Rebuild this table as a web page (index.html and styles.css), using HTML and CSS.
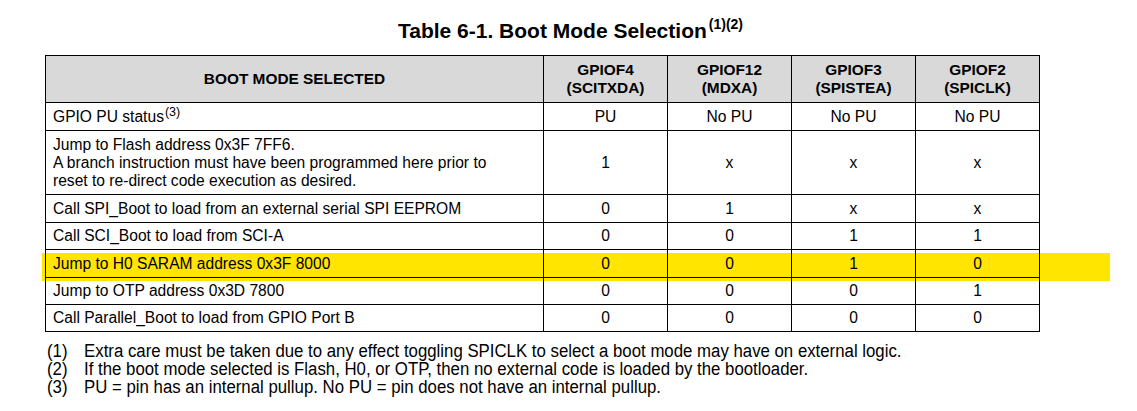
FILE: index.html
```html
<!DOCTYPE html>
<html>
<head>
<meta charset="utf-8">
<link rel="stylesheet" href="styles.css">
</head>
<body>
<div class="page">
  <h1 class="title">Table 6-1. Boot Mode Selection<sup class="tsup">(1)(2)</sup></h1>
  <div class="highlight"></div>
  <table class="boot">
    <thead>
      <tr>
        <th class="c-mode">BOOT MODE SELECTED</th>
        <th class="c-pin">GPIOF4<br>(SCITXDA)</th>
        <th class="c-pin">GPIOF12<br>(MDXA)</th>
        <th class="c-pin">GPIOF3<br>(SPISTEA)</th>
        <th class="c-pin">GPIOF2<br>(SPICLK)</th>
      </tr>
    </thead>
    <tbody>
      <tr>
        <td class="desc">GPIO PU status<sup class="rsup">(3)</sup></td>
        <td>PU</td><td>No PU</td><td>No PU</td><td>No PU</td>
      </tr>
      <tr>
        <td class="desc">Jump to Flash address 0x3F 7FF6.<br>A branch instruction must have been programmed here prior to<br>reset to re-direct code execution as desired.</td>
        <td>1</td><td>x</td><td>x</td><td>x</td>
      </tr>
      <tr>
        <td class="desc">Call SPI_Boot to load from an external serial SPI EEPROM</td>
        <td>0</td><td>1</td><td>x</td><td>x</td>
      </tr>
      <tr class="tight">
        <td class="desc">Call SCI_Boot to load from SCI-A</td>
        <td>0</td><td>0</td><td>1</td><td>1</td>
      </tr>
      <tr>
        <td class="desc">Jump to H0 SARAM address 0x3F 8000</td>
        <td>0</td><td>0</td><td>1</td><td>0</td>
      </tr>
      <tr class="tight">
        <td class="desc">Jump to OTP address 0x3D 7800</td>
        <td>0</td><td>0</td><td>0</td><td>1</td>
      </tr>
      <tr class="tight">
        <td class="desc">Call Parallel_Boot to load from GPIO Port B</td>
        <td>0</td><td>0</td><td>0</td><td>0</td>
      </tr>
    </tbody>
  </table>
  <ol class="notes">
    <li><span class="num">(1)</span><span class="txt">Extra care must be taken due to any effect toggling SPICLK to select a boot mode may have on external logic.</span></li>
    <li><span class="num">(2)</span><span class="txt">If the boot mode selected is Flash, H0, or OTP, then no external code is loaded by the bootloader.</span></li>
    <li><span class="num">(3)</span><span class="txt">PU = pin has an internal pullup. No PU = pin does not have an internal pullup.</span></li>
  </ol>
</div>
</body>
</html>
```

FILE: styles.css
```css
html {
  background: #ffffff;
}
body {
  margin: 0;
  font-family: "Liberation Sans", Arial, sans-serif;
  color: #000;
}
.page {
  position: relative;
  width: 1137px;
  height: 411px;
}
.title {
  margin: 0;
  padding-top: 20px;
  height: 42px;
  box-sizing: border-box;
  font-size: 21px;
  line-height: 22px;
  font-weight: bold;
  text-align: center;
  padding-left: 4px;
}
.tsup {
  font-size: 14px;
  line-height: 0;
  vertical-align: 9px;
  margin-left: 2px;
}
.highlight {
  position: absolute;
  left: 42px;
  top: 253px;
  width: 1068px;
  height: 28px;
  background: #ffe500;
  z-index: 0;
}
.boot {
  position: relative;
  z-index: 1;
  margin: 13px 0 0 45px;
  width: 995px;
  border-collapse: collapse;
  font-size: 15.6px;
  line-height: 18px;
  table-layout: fixed;
}
.boot th,
.boot td {
  box-sizing: border-box;
  border: 1px solid #000;
  padding: 5px 7px 4px;
  text-align: center;
  vertical-align: middle;
}
.boot tr.tight td {
  padding: 4px 7px;
}
.boot th {
  background: #d9d9d9;
  font-weight: bold;
  font-size: 15.4px;
  padding: 5px 4px 5px;
  height: 47px;
}
.c-mode {
  width: 498px;
}
.c-pin {
  width: 124px;
}
.boot td.desc {
  text-align: left;
}
.rsup {
  font-size: 12.5px;
  line-height: 0;
  vertical-align: 6px;
  margin-left: 1px;
}
.notes {
  list-style: none;
  margin: 10px 0 0 47px;
  padding: 0;
  width: 1100px;
  font-family: "Liberation Sans", Arial, sans-serif;
  font-size: 18px;
  line-height: 18px;
  transform: scaleX(0.933);
  transform-origin: left top;
}
.notes li {
  display: flex;
}
.num {
  width: 39.7px;
  flex: none;
}
```
